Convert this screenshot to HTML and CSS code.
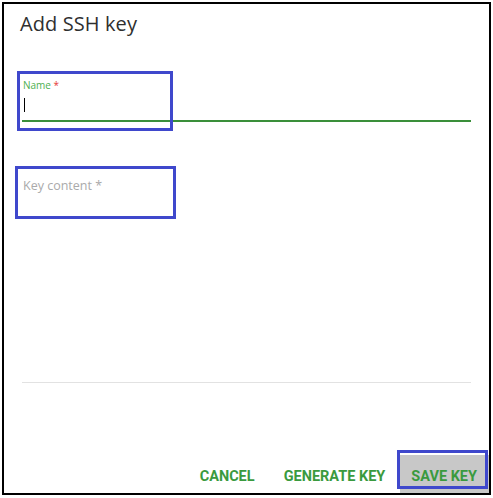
FILE: index.html
```html
<!DOCTYPE html>
<html>
<head>
<meta charset="utf-8">
<link rel="stylesheet" href="styles.css">
</head>
<body>
<div class="dialog">
  <h1 class="title">Add SSH key</h1>
  <div class="fields">
    <div class="field field-name">
      <label class="label">Name <span class="req">*</span></label>
      <div class="input"><span class="caret"></span></div>
      <div class="mark mark-name"></div>
    </div>
    <div class="field field-key">
      <div class="placeholder">Key content *</div>
      <div class="mark mark-key"></div>
    </div>
  </div>
  <div class="divider"></div>
  <div class="actions">
    <button class="btn btn-cancel">CANCEL</button>
    <button class="btn btn-gen">GENERATE KEY</button>
    <button class="btn btn-save">SAVE KEY<span class="mark mark-save"></span></button>
  </div>
</div>
</body>
</html>
```

FILE: styles.css
```css
html, body {
  margin: 0;
  padding: 0;
  background: #fff;
}
body {
  font-family: "Open Sans", "Liberation Sans", sans-serif;
}
.dialog {
  box-sizing: border-box;
  margin: 2px 0 0 2px;
  width: 489px;
  height: 493px;
  border: 2px solid #000;
  display: flex;
  flex-direction: column;
}
.title {
  margin: 0;
  padding: 5px 0 0 16px;
  font-size: 20px;
  font-weight: 500;
  color: #2f2f2f;
  line-height: 29px;
  letter-spacing: 0.1px;
}
.fields {
  padding: 0 18px 0 18px;
  flex: 1;
  display: flex;
  flex-direction: column;
}
.field {
  position: relative;
}
.field-name {
  margin-top: 41px;
  border-bottom: 2px solid #3a8f3a;
  height: 41px;
}
.label {
  display: block;
  padding: 0 0 0 1px;
  font-size: 10px;
  line-height: 12px;
  color: #4caf50;
}
.req {
  color: #e53935;
}
.input {
  height: 20px;
  padding: 7px 0 0 2px;
}
.caret {
  display: block;
  width: 1px;
  height: 14px;
  background: #000;
}
.field-key {
  margin-top: 48px;
  height: 50px;
}
.placeholder {
  padding: 8px 0 0 1px;
  font-size: 12.5px;
  line-height: 16px;
  color: #aaa;
}
.mark {
  position: absolute;
  box-sizing: border-box;
  border: 3px solid #3f48cc;
}
.mark-name {
  left: -5px;
  top: -8px;
  width: 156px;
  height: 60px;
}
.mark-key {
  left: -7px;
  top: -4px;
  width: 161px;
  height: 53px;
}
.divider {
  height: 1px;
  background: #e2e2e2;
  margin: 0 18px 0 18px;
}
.actions {
  height: 110px;
  display: flex;
  justify-content: flex-end;
  align-items: flex-end;
}
.btn {
  font-family: "Roboto", "Liberation Sans", sans-serif;
  font-weight: 700;
  font-size: 14.5px;
  color: #3a9a3e;
  background: transparent;
  border: none;
  height: 38px;
  padding: 5px 11px 0 11px;
  margin: 0;
  position: relative;
  letter-spacing: 0;
  white-space: nowrap;
  flex-shrink: 0;
}
.btn-cancel {
  margin-right: 7px;
}
.btn-gen {
  margin-right: 4px;
}
.btn-save {
  background: #c8c8c8;
  padding: 5px 12px 0 11px;
}
.mark-save {
  left: -3px;
  top: -5px;
  width: 91px;
  height: 39px;
}
```
